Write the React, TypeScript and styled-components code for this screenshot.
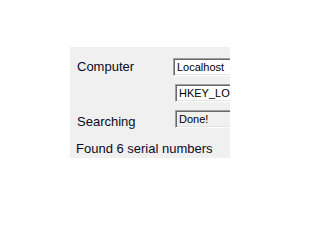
import React from 'react';
import styled, { createGlobalStyle } from 'styled-components';

const GlobalStyle = createGlobalStyle`
  html, body {
    margin: 0;
    padding: 0;
    background: #fff;
  }
`;

const Page = styled.div`
  width: 300px;
  height: 206px;
  padding: 47px 0 0 70px;
  box-sizing: border-box;
`;

const Panel = styled.div`
  width: 160px;
  height: 111px;
  background: #f0f0f0;
  overflow: hidden;
  padding: 11px 0 0 6px;
  box-sizing: border-box;
  font-family: 'Liberation Sans', Arial, sans-serif;
  color: #0a0a1e;
`;

const Form = styled.div`
  display: grid;
  grid-template-columns: 97px 80px;
  grid-auto-rows: 18px;
  row-gap: 8px;
`;

const Label = styled.div<{ $shift?: number }>`
  font-size: 13px;
  line-height: 18px;
  padding-top: ${(p) => p.$shift || 0}px;
  padding-left: 1px;
  white-space: nowrap;
`;

const Field = styled.div<{ $readOnly?: boolean; $indent?: number }>`
  height: 18px;
  margin-left: ${(p) => p.$indent || 0}px;
  box-sizing: border-box;
  border: 1px solid;
  border-color: #a0a0a0 #fff #fff #a0a0a0;
  box-shadow: inset 1px 1px 0 #696969, inset -1px -1px 0 #e3e3e3;
  background: ${(p) => (p.$readOnly ? '#f0f0f0' : '#fff')};
  font-size: 11px;
  line-height: 16px;
  padding-left: 3px;
  white-space: nowrap;
  overflow: hidden;
  color: #000;
`;

const Status = styled.div`
  font-size: 13px;
  line-height: 15px;
  margin-top: 13px;
  white-space: nowrap;
`;

const App: React.FC = () => (
  <>
    <GlobalStyle />
    <Page>
      <Panel>
        <Form>
          <Label>Computer</Label>
          <Field>Localhost</Field>
          <span />
          <Field $indent={2}>HKEY_LOCAL_MACHINE</Field>
          <Label $shift={3}>Searching</Label>
          <Field $indent={2} $readOnly>Done!</Field>
        </Form>
        <Status>Found 6 serial numbers</Status>
      </Panel>
    </Page>
  </>
);

export default App;
